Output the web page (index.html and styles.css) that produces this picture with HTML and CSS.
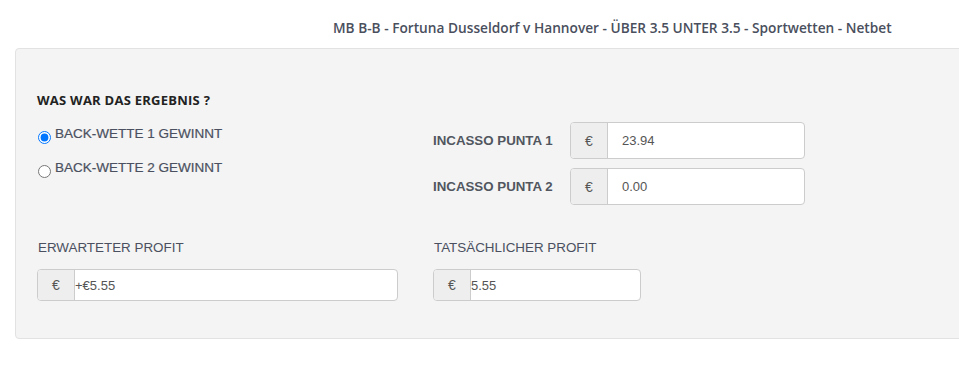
FILE: index.html
```html
<!DOCTYPE html>
<html lang="de">
<head>
<meta charset="utf-8">
<title>Netbet</title>
<link rel="stylesheet" href="styles.css">
</head>
<body>
<header class="top">
  <h1 class="title">MB B-B - Fortuna Dusseldorf v Hannover - ÜBER 3.5 UNTER 3.5 - Sportwetten - Netbet</h1>
</header>
<section class="panel">
  <h2 class="heading">WAS WAR DAS ERGEBNIS ?</h2>
  <div class="grid">
    <div class="radios">
      <label class="radio"><input type="radio" name="res" checked> BACK-WETTE 1 GEWINNT</label>
      <label class="radio"><input type="radio" name="res"> BACK-WETTE 2 GEWINNT</label>
    </div>
    <div class="incasso">
      <div class="irow">
        <span class="ilabel">INCASSO PUNTA 1</span>
        <div class="group tall"><span class="addon">€</span><span class="field padded">23.94</span></div>
      </div>
      <div class="irow">
        <span class="ilabel">INCASSO PUNTA 2</span>
        <div class="group tall"><span class="addon">€</span><span class="field padded">0.00</span></div>
      </div>
    </div>
    <div class="profit">
      <div class="plabel">ERWARTETER PROFIT</div>
      <div class="group short wide"><span class="addon">€</span><span class="field">+€5.55</span></div>
    </div>
    <div class="profit">
      <div class="plabel">TATSÄCHLICHER PROFIT</div>
      <div class="group short narrow"><span class="addon">€</span><span class="field">5.55</span></div>
    </div>
  </div>
</section>
</body>
</html>
```
FILE: styles.css
```css
html, body {
  margin: 0;
  padding: 0;
  background: #ffffff;
}
body {
  font-family: "Liberation Sans", Arial, sans-serif;
  overflow: hidden;
}
.top {
  height: 48px;
  box-sizing: border-box;
  padding-left: 333px;
}
.title {
  margin: 0;
  padding-top: 19px;
  font-family: "Open Sans", "Noto Sans", sans-serif;
  font-weight: 600;
  font-size: 13.7px;
  line-height: 17px;
  color: #4a4f5d;
  white-space: nowrap;
}
.panel {
  margin-left: 15px;
  margin-right: -10px;
  height: 291px;
  box-sizing: border-box;
  background: #f4f4f4;
  border: 1px solid #e2e2e2;
  border-radius: 4px;
  padding: 43px 0 0 21px;
}
.heading {
  margin: 0;
  font-family: "Open Sans", "Noto Sans", sans-serif;
  font-weight: 700;
  font-size: 13px;
  letter-spacing: 0.25px;
  line-height: 16px;
  color: #222222;
}
.grid {
  display: grid;
  grid-template-columns: 396px 396px;
  margin-top: 14px;
}
.radios {
  padding-top: 2px;
}
.radio {
  display: flex;
  align-items: flex-start;
  font-size: 13.5px;
  line-height: 20px;
  height: 34px;
  color: #4a5060;
  -webkit-text-stroke: 0.2px #4a5060;
}
.radio input {
  margin: 7px 4px 0 1px;
  width: 13px;
  height: 13px;
}
.incasso {
  display: flex;
  flex-direction: column;
  gap: 9px;
}
.irow {
  display: flex;
  align-items: center;
}
.ilabel {
  width: 137px;
  font-size: 13.3px;
  font-weight: 700;
  color: #51565f;
}
.group {
  display: flex;
  box-sizing: border-box;
  border: 1px solid #cccccc;
  border-radius: 4px;
  background: #ffffff;
  overflow: hidden;
}
.group.tall {
  width: 235px;
  height: 37px;
}
.group.short {
  height: 32px;
}
.group.wide {
  width: 361px;
}
.group.narrow {
  width: 208px;
}
.addon {
  width: 36px;
  flex: none;
  display: flex;
  align-items: center;
  justify-content: center;
  background: #eeeeee;
  border-right: 1px solid #cccccc;
  color: #555555;
  font-size: 14px;
}
.field {
  display: flex;
  align-items: center;
  font-size: 13px;
  color: #555555;
  padding-left: 0;
}
.field.padded {
  padding-left: 14px;
}
.profit {
  margin-top: 34px;
}
.plabel {
  font-size: 13.4px;
  line-height: 18px;
  color: #4a5060;
  margin-bottom: 12px;
  padding-left: 1px;
}
```
